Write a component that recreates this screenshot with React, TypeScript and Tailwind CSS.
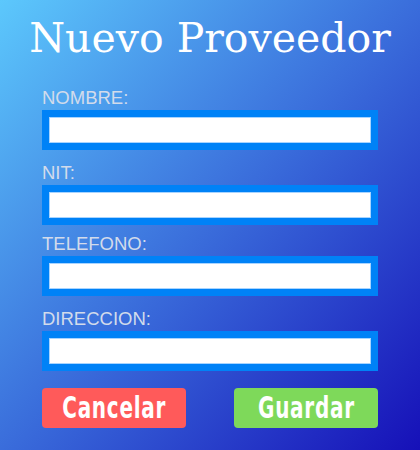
import React from "react";

const fields = [
  { label: "NOMBRE:", mt: "mt-0" },
  { label: "NIT:", mt: "mt-[13px]" },
  { label: "TELEFONO:", mt: "mt-[9px]" },
  { label: "DIRECCION:", mt: "mt-[13px]" },
];

const btnFont = {
  fontFamily: '"DejaVu Sans Condensed", "DejaVu Sans", sans-serif',
  fontStretch: "condensed" as const,
};

export default function App() {
  return (
    <div className="w-[420px] h-[450px] overflow-hidden bg-[linear-gradient(to_bottom_right,#5cc8fc,#3a6ddb_50%,#1610b8)]">
      <h1
        className="text-white text-[41px] leading-[48px] pt-[14px] text-center"
        style={{ fontFamily: '"DejaVu Serif", serif' }}
      >
        Nuevo Proveedor
      </h1>
      <div className="px-[42px] mt-[26px]">
        {fields.map((f) => (
          <div key={f.label} className={f.mt}>
            <div
              className="text-[18.5px] leading-[20px] mb-[2px] text-[#d2dbeb]"
              style={{ fontFamily: '"Liberation Sans", sans-serif' }}
            >
              {f.label}
            </div>
            <div className="bg-[#0082f7] p-[7px] h-[40px]">
              <div className="h-[26px] bg-white border border-[#a8d4ff]" />
            </div>
          </div>
        ))}
        <div className="flex justify-between mt-[17px]">
          <button className="w-[144px] h-[40px] rounded-[4px] bg-[#ff5a5a] text-white text-[30px] font-bold leading-none flex items-center justify-center">
            <span className="inline-block scale-x-[0.74] tracking-[1px]" style={btnFont}>
              Cancelar
            </span>
          </button>
          <button className="w-[144px] h-[40px] rounded-[4px] bg-[#7ed95a] text-white text-[30px] font-bold leading-none flex items-center justify-center">
            <span className="inline-block scale-x-[0.74] tracking-[1px]" style={btnFont}>
              Guardar
            </span>
          </button>
        </div>
      </div>
    </div>
  );
}
